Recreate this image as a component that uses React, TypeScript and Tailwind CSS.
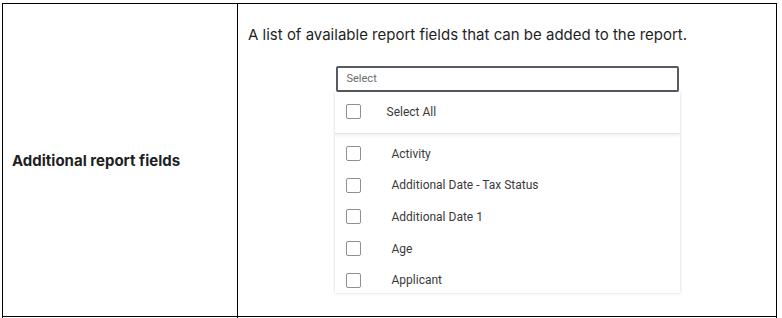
import React from 'react'

const FIELDS = [
  'Activity',
  'Additional Date - Tax Status',
  'Additional Date 1',
  'Age',
  'Applicant',
]

function Box() {
  return <span className="block w-[15px] h-[15px] shrink-0 rounded-[2px] border border-[#8f8f8f] bg-white" />
}

function FieldPicker() {
  return (
    <div className="w-[345px] mx-auto mt-[21px]">
      <div className="mx-px h-[26px] flex items-center px-[9px] border-2 border-[#565b63] rounded-[2px] text-[11px] text-[#6b6b6b] font-['Roboto',sans-serif]">
        Select
      </div>
      {/* lista desplegable */}
      <div className="h-[201px] overflow-hidden bg-white shadow-[0_0_3px_rgba(0,0,0,0.18)] font-['Roboto',sans-serif] text-[12px] text-[#3a3a3a]">
        <div className="relative h-[42px] flex items-center pl-[11px] pb-[2px] border-b border-[#e3e3e3] shadow-[0_2px_3px_rgba(0,0,0,0.06)]">
          <Box />
          <span className="ml-[26px]">Select All</span>
        </div>
        <div className="pt-[4px]">
          {FIELDS.map((f) => (
            <div key={f} className="h-[31.6px] flex items-center pl-[11px]">
              <Box />
              <span className="ml-[31px]">{f}</span>
            </div>
          ))}
        </div>
      </div>
    </div>
  )
}

export default function App() {
  return (
    <div className="bg-white w-[782px] h-[318px] overflow-hidden pl-[2px] pt-[3px]">
      <table className="w-[775px] border-collapse font-['Inter',sans-serif] text-[#1f1f1f]">
        <tbody>
          <tr>
            <td className="w-[235px] border border-black align-middle px-[9px] pt-[3px] text-[15px] font-bold">
              Additional report fields
            </td>
            <td className="border border-black align-top px-[10px] pt-[21px] pb-[23px]">
              <p className="text-[15px] leading-[20px]">
                A list of available report fields that can be added to the report.
              </p>
              <FieldPicker />
            </td>
          </tr>
          <tr>
            <td className="border border-black h-[40px]"></td>
            <td className="border border-black"></td>
          </tr>
        </tbody>
      </table>
    </div>
  )
}
